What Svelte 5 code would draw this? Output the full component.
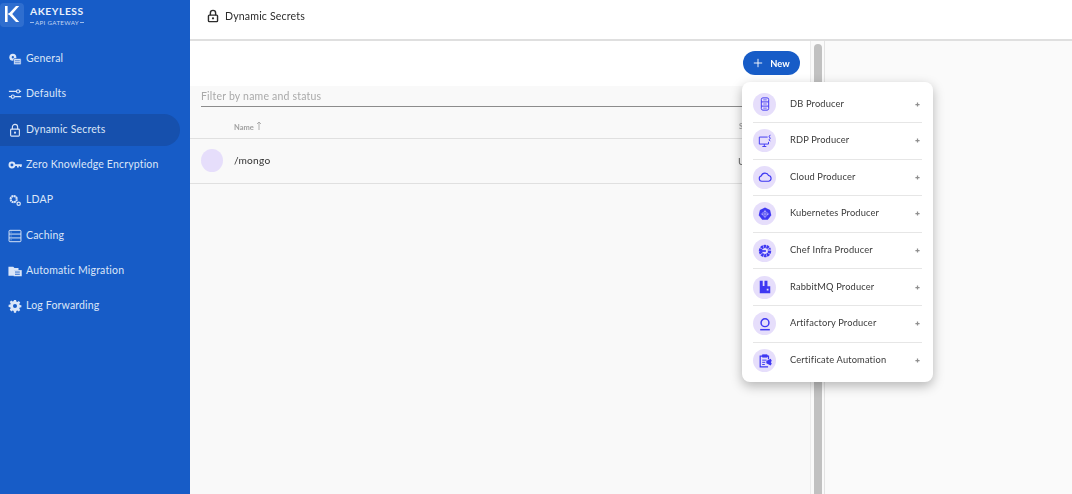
<script>
  const nav = [
    { id: 'general', label: 'General' },
    { id: 'defaults', label: 'Defaults' },
    { id: 'lock', label: 'Dynamic Secrets', active: true },
    { id: 'key', label: 'Zero Knowledge Encryption' },
    { id: 'ldap', label: 'LDAP' },
    { id: 'caching', label: 'Caching' },
    { id: 'migration', label: 'Automatic Migration' },
    { id: 'gear', label: 'Log Forwarding' }
  ];
  const producers = [
    { id: 'db', label: 'DB Producer' },
    { id: 'rdp', label: 'RDP Producer' },
    { id: 'cloud', label: 'Cloud Producer' },
    { id: 'k8s', label: 'Kubernetes Producer' },
    { id: 'chef', label: 'Chef Infra Producer' },
    { id: 'rabbit', label: 'RabbitMQ Producer' },
    { id: 'artifactory', label: 'Artifactory Producer' },
    { id: 'cert', label: 'Certificate Automation' }
  ];
</script>

{#snippet navIcon(id)}
  <svg class="nav-icon" viewBox="0 0 16 16" fill="none" stroke="currentColor" stroke-width="1.2">
    {#if id === 'general'}
      <circle cx="5.500" cy="6" r="4" fill="currentColor" stroke="none" />
      <circle cx="5.500" cy="6" r="1.300" fill="#175cc7" stroke="none" />
      <rect x="6.500" y="7.500" width="8.500" height="7" rx="1" fill="currentColor" stroke="#175cc7" stroke-width=".8" />
      <path d="M8 10h5.500M8 12.300h5.500" stroke="#175cc7" stroke-width=".8" />
    {:else if id === 'defaults'}
      <path d="M1 5h8.500M13.500 5h1.500M1 11h2.500M7.500 11h7.500" stroke-width="1.300" />
      <circle cx="11.500" cy="5" r="1.800" stroke-width="1.300" />
      <circle cx="5.500" cy="11" r="1.800" stroke-width="1.300" />
    {:else if id === 'lock'}
      <path d="M5 7V4.600a3 3 0 0 1 6 0V7" stroke-width="1.300" />
      <rect x="3" y="7" width="10" height="8" rx="1" stroke-width="1.300" />
      <circle cx="8" cy="11" r="1.200" fill="currentColor" stroke="none" />
    {:else if id === 'key'}
      <circle cx="4.500" cy="8" r="2.800" stroke-width="2.200" />
      <path d="M7 8h8.800M11.300 8v2.800M14.500 8v2.400" stroke-width="2" />
    {:else if id === 'ldap'}
      <circle cx="6.500" cy="7" r="3.500" stroke-width="2.400" stroke-dasharray="2.200 .5" />
      <circle cx="12.200" cy="12.300" r="1.900" stroke-width="1.400" />
    {:else if id === 'caching'}
      <rect x="1.200" y="1.500" width="13.600" height="13" rx="1" stroke-width="1.100" />
      <path d="M1.200 5.800h13.600M1.200 10.200h13.600" stroke-width="1.100" />
      <path d="M3 3.600h1M3 8h1M3 12.300h1" stroke-width=".9" />
    {:else if id === 'migration'}
      <path d="M.5 3h5.500l1.400 1.700H12V7.200H7v6.300H.5z" fill="currentColor" stroke="none" />
      <rect x="6.500" y="7" width="9.200" height="7" fill="currentColor" stroke="none" />
      <path d="M8 9.200h5.500M13.500 11.700H8" stroke="#175cc7" stroke-width="1" />
    {:else}
      <path
        fill="currentColor"
        stroke="none"
        fill-rule="evenodd"
        d="M6.800 1h2.400l.3 1.900 1.200.5 1.600-1.100 1.700 1.700-1.100 1.600.5 1.200 1.900.3v2.400l-1.900.3-.5 1.200 1.100 1.600-1.700 1.700-1.600-1.100-1.200.5-.3 1.900H6.800l-.3-1.900-1.200-.5-1.600 1.100L2 12.100l1.100-1.600-.5-1.200-1.900-.3V6.600l1.900-.3.5-1.200L2 3.500l1.700-1.700 1.600 1.100 1.200-.5zM8 5.700a2.300 2.300 0 1 0 0 4.600 2.300 2.300 0 0 0 0-4.600z"
      />
    {/if}
  </svg>
{/snippet}

{#snippet producerIcon(id)}
  <svg class="producer-icon" viewBox="0 0 16 16" fill="none" stroke="#3f38f2" stroke-width="1.100">
    {#if id === 'db'}
      <rect x="3.800" y="1" width="8.400" height="14" rx="1.800" />
      <path d="M3.800 5.600h8.400M3.800 10.400h8.400" />
      <path d="M6 3.300h4M6 8h4M6 12.700h4" stroke-width=".8" />
    {:else if id === 'rdp'}
      <path d="M11 3.500H1.500v8h10.500V9" />
      <path d="M5 14.300h4.500M7.200 11.500v2.800" />
      <path d="M14 1l-1.500 2.200 1.800 1.600-1.800 1.700 1.500 1.700" />
    {:else if id === 'cloud'}
      <path stroke-width="1.300" d="M4.300 12.800a3.100 3.100 0 0 1-.5-6.100 4.400 4.400 0 0 1 8.300-.4 3.300 3.300 0 0 1 .2 6.500z" />
    {:else if id === 'k8s'}
      <path fill="#3f38f2" stroke="none" d="M8 .5l5.800 2.800 1.400 6.200-4 5h-6.400l-4-5 1.400-6.200z" />
      <circle cx="8" cy="8" r="2.800" stroke="#e6defb" stroke-width="1" stroke-dasharray="1.100 .8" />
      <path d="M8 3.300v9.400M3.300 8h9.400" stroke="#e6defb" stroke-width=".6" />
    {:else if id === 'chef'}
      <circle cx="8" cy="8" r="5.200" stroke-width="3.800" stroke-dasharray="2.600 .6" />
      <path d="M2 8h7" stroke="#3f38f2" stroke-width="2" />
      <path d="M9.500 6.800h6" stroke="#e6defb" stroke-width=".9" />
    {:else if id === 'rabbit'}
      <path fill="#3f38f2" stroke="none" d="M2 .8h3.400v6h2V.8h3.400V7H14v8H2z" />
      <rect x="10" y="10" width="2" height="2" fill="#e6defb" stroke="none" />
    {:else if id === 'artifactory'}
      <circle cx="8" cy="6.500" r="4.500" stroke-width="1.700" />
      <path d="M2.500 14.500h11" stroke-width="1.700" />
    {:else}
      <path d="M12 6V2.500H2.500v12.200h9" stroke-width="1.400" />
      <path d="M5 1h5.500v2.500H5z" fill="#3f38f2" />
      <path d="M4.800 7h5M4.800 9.500h3.500M4.800 12h3" stroke-width="1.100" />
      <path fill="#3f38f2" stroke="none" d="M9.500 8l5-2.500 1.200 2.200-1 1.600 1 1.600-1.200 2.200-5-2.500z" />
    {/if}
  </svg>
{/snippet}

<div class="app">
  <aside class="sidebar">
    <header class="brand">
      <div class="logo">
        <svg viewBox="0 0 24 24" width="24" height="24">
          <path fill="#fff" d="M5 3h2.600v16H5z" />
          <path fill="#fff" d="M16 3h3.200l-7 8 7 8H16l-6.600-7H8.400v-2h1z" />
        </svg>
      </div>
      <div class="brand-text">
        <div class="brand-name">AKEYLESS</div>
        <div class="brand-sub"><i></i><span>API GATEWAY</span><i></i></div>
      </div>
    </header>
    <nav class="nav">
      {#each nav as item}
        <div class="nav-item" class:active={item.active}>
          {@render navIcon(item.id)}
          <span>{item.label}</span>
        </div>
      {/each}
    </nav>
  </aside>

  <div class="content">
    <header class="topbar">
      <svg class="top-lock" viewBox="0 0 16 16" fill="none" stroke="currentColor" stroke-width="1.600">
        <path d="M5 7V4.600a3 3 0 0 1 6 0V7" />
        <rect x="2.800" y="7" width="10.400" height="7.400" rx="1" />
        <circle cx="8" cy="10.700" r="1.300" fill="currentColor" stroke="none" />
      </svg>
      <span>Dynamic Secrets</span>
    </header>

    <div class="panes">
      <section class="list-pane">
        <div class="actions">
          <div class="new-btn">
            <svg viewBox="0 0 12 12" width="10" height="10" stroke="#fff" stroke-width="1.100"><path d="M6 1v10M1 6h10" /></svg>
            <span>New</span>
          </div>
        </div>
        <div class="list-body">
          <div class="filter"><span>Filter by name and status</span></div>
          <div class="table-head">
            <span class="col-name">Name
              <svg viewBox="0 0 6 9" width="6" height="9" fill="none" stroke="#a0a0a0" stroke-width=".8"><path d="M3 9V1M1 3l2-2 2 2" /></svg>
            </span>
            <span class="col-status">S</span>
          </div>
          <div class="table-row">
            <span class="avatar"></span>
            <span class="row-name">/mongo</span>
            <span class="row-status">U</span>
          </div>
        </div>
      </section>
      <div class="scrollbar"><div class="thumb"></div></div>
      <section class="detail-pane"></section>
    </div>
  </div>

  <div class="menu">
    {#each producers as p, i}
      <div class="menu-row" class:last={i === producers.length - 1}>
        <span class="icon-circle">{@render producerIcon(p.id)}</span>
        <span class="menu-label">{p.label}</span>
        <svg class="menu-plus" viewBox="0 0 6 6" stroke="#8f8f8f" stroke-width="1.500"><path d="M3 .5v5M.5 3h5" /></svg>
      </div>
    {/each}
  </div>
</div>

<style>
  :global(body) {
    margin: 0;
    background: #fff;
  }
  .app {
    position: relative;
    display: flex;
    width: 1072px;
    height: 494px;
    overflow: hidden;
    font-family: Lato, "Open Sans", sans-serif;
    will-change: opacity;
  }
  .sidebar {
    flex: 0 0 190px;
    background: #175cc7;
    color: #dbe6f8;
  }
  .brand {
    display: flex;
    align-items: flex-start;
    gap: 6px;
    height: 41px;
  }
  .logo {
    width: 24px;
    height: 24px;
    margin-top: 3px;
    background: #2f6ecf;
    border-radius: 4px;
  }
  .logo svg {
    display: block;
  }
  .brand-text {
    padding-top: 5px;
    color: #e9f0fb;
  }
  .brand-name {
    font-size: 10.300px;
    line-height: 13px;
    font-weight: 700;
    letter-spacing: 0.55px;
  }
  .brand-sub {
    display: flex;
    align-items: center;
    gap: 1px;
    font-size: 6.200px;
    line-height: 9px;
    letter-spacing: 0.32px;
    color: #c2d5f2;
  }
  .brand-sub i {
    width: 4px;
    height: 1px;
    background: #9dbbea;
  }
  .nav-item {
    display: flex;
    align-items: center;
    gap: 4px;
    box-sizing: border-box;
    width: 180px;
    height: 32px;
    margin-bottom: 3.300px;
    padding-left: 8px;
    font-size: 10.500px;
    letter-spacing: 0.17px;
    border-radius: 0 16px 16px 0;
  }
  .nav-item:first-child {
    margin-top: 2.200px;
  }
  .nav-item span {
    position: relative;
    top: -1px;
  }
  .nav-item.active {
    background: #1650ad;
  }
  .nav-icon {
    flex: 0 0 14px;
    width: 14px;
    height: 14px;
  }
  .content {
    flex: 1;
    display: flex;
    flex-direction: column;
    min-width: 0;
  }
  .topbar {
    display: flex;
    align-items: center;
    gap: 5px;
    box-sizing: border-box;
    height: 41px;
    padding: 0 0 8px 16px;
    border-bottom: 2px solid #dfdfdf;
    font-size: 10.600px;
    letter-spacing: 0.15px;
    color: #2c2c2c;
  }
  .top-lock {
    width: 14px;
    height: 14px;
  }
  .panes {
    flex: 1;
    display: flex;
    min-height: 0;
  }
  .list-pane {
    flex: 0 0 620px;
    display: flex;
    flex-direction: column;
  }
  .actions {
    flex: 0 0 45px;
    display: flex;
    justify-content: flex-end;
    align-items: flex-start;
    padding: 10px 10px 0 0;
    box-sizing: border-box;
  }
  .new-btn {
    display: flex;
    align-items: center;
    justify-content: center;
    gap: 7px;
    width: 57px;
    height: 24px;
    background: #175cc7;
    border-radius: 12px;
    color: #fff;
    font-size: 9.300px;
    font-weight: 700;
  }
  .list-body {
    flex: 1;
    background: #f9f9f9;
  }
  .filter {
    margin: 0 0 0 11px;
    height: 21px;
    border-bottom: 1px solid #8c8c8c;
    box-sizing: border-box;
    font-size: 10.500px;
    line-height: 20px;
    letter-spacing: 0.2px;
    color: #a9a9a9;
  }
  .table-head {
    position: relative;
    height: 31px;
    border-bottom: 1px solid #e0e0e0;
    font-size: 7.500px;
    font-weight: 700;
    color: #a0a0a0;
  }
  .col-name {
    position: absolute;
    left: 44px;
    top: 14px;
  }
  .col-status {
    position: absolute;
    left: 549px;
    top: 15px;
  }
  .table-row {
    position: relative;
    display: flex;
    align-items: center;
    height: 44px;
    padding-left: 11px;
    border-bottom: 1px solid #e0e0e0;
    font-size: 10.200px;
    letter-spacing: 0.2px;
    color: #333;
  }
  .avatar {
    width: 22px;
    height: 23px;
    border-radius: 50%;
    background: #e6defb;
    margin: 0 11px 2px 0;
  }
  .row-name {
    position: relative;
    top: -1px;
  }
  .row-status {
    position: absolute;
    left: 548px;
    color: #666;
  }
  .scrollbar {
    flex: 0 0 15px;
    border-left: 1px solid #ececec;
    border-right: 1px solid #e3e3e3;
    box-sizing: border-box;
    background: #fafafa;
    padding: 3px 2px 0 3px;
  }
  .thumb {
    height: 100%;
    background: #c1c1c1;
    border-radius: 4px 4px 0 0;
  }
  .detail-pane {
    flex: 1;
    background: #fafafa;
  }
  .menu {
    position: absolute;
    left: 742px;
    top: 82px;
    width: 191px;
    height: 300px;
    box-sizing: border-box;
    padding: 4.400px 11px 0;
    background: #fff;
    border-radius: 8px;
    box-shadow: 0 4px 12px rgba(0, 0, 0, 0.28);
  }
  .menu-row {
    display: flex;
    align-items: center;
    height: 36.600px;
    box-sizing: border-box;
    border-bottom: 1px solid #e6e6e6;
    font-size: 9.300px;
    letter-spacing: 0.15px;
    color: #3a3a3a;
  }
  .menu-row.last {
    border-bottom: 0;
  }
  .icon-circle {
    flex: 0 0 23px;
    width: 23px;
    height: 23px;
    border-radius: 50%;
    background: #e6defb;
    display: flex;
    align-items: center;
    justify-content: center;
  }
  .producer-icon {
    width: 14px;
    height: 14px;
  }
  .menu-label {
    margin-left: 14px;
    flex: 1;
    position: relative;
    top: -1px;
  }
  .menu-plus {
    width: 5px;
    height: 5px;
    margin-right: 2px;
  }
</style>
